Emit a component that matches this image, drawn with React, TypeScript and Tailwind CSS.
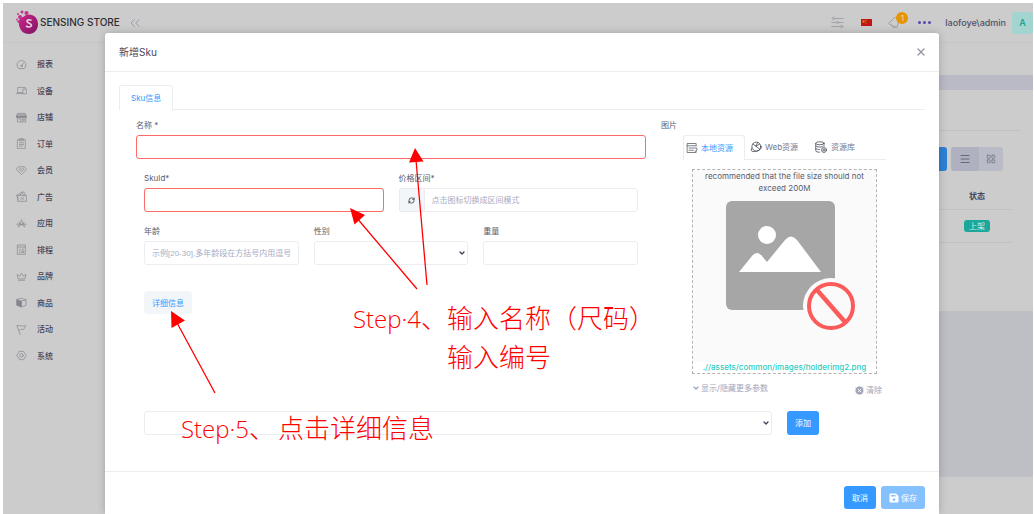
import React from "react";
import {
  ChevronDown,
  ChevronsLeft,
  CircleX,
  Menu,
  LayoutGrid,
  RefreshCw,
  X,
} from "lucide-react";

const stroke = {
  fill: "none",
  stroke: "currentColor",
  strokeWidth: 1,
  strokeLinecap: "round" as const,
  strokeLinejoin: "round" as const,
};

function Glyph({ children, className = "size-[11px]" }: { children: React.ReactNode; className?: string }) {
  return (
    <svg viewBox="0 0 16 16" className={`shrink-0 ${className}`} aria-hidden="true" {...stroke}>
      {children}
    </svg>
  );
}

const menu = [
  {
    label: "报表",
    icon: (
      <>
        <path d="M3.5 13.5a6.5 6.5 0 1 1 9 0zM8 10l3-4" />
        <circle cx="8" cy="10" r="1" />
      </>
    ),
  },
  {
    label: "设备",
    icon: <path d="M2.5 11V3.5h11V5M.5 12.5h9M10.500 6h4.500v7h-4.500zM2.500 11h7" />,
  },
  {
    label: "店铺",
    icon: (
      <>
        <path d="M3 2h10l2 4H1zM2 8v6.500h12V8M4 10h3v4M9.500 10H12v2H9.500z" />
        <path d="M1 6h14v2H1zM2 4h12" fill="currentColor" />
      </>
    ),
  },
  {
    label: "订单",
    icon: <path d="M2.500 2.500h11v13h-11zM5.500 1h5v3h-5zM5 7h6M5 9.500h6M5 12h4" />,
  },
  {
    label: "会员",
    icon: <path d="M4 2.500h8l3.500 4L8 14 .5 6.500zM4.500 6.500 8 10l3.500-3.500M5 4.500l3 2 3-2" />,
  },
  {
    label: "广告",
    icon: <path d="M3 6.500h12v8.500H3zM3 12 .8 6 9 2l2 4.500M6 6 9 .8 13 3v3.500M7 12.500l4-3M7 10h.5M10.500 12h.5" />,
  },
  {
    label: "应用",
    icon: <path d="M8 3 3 13M8 3l5 10M1 9h14M4 6.500l8 6M12 6.500l-8 6" />,
  },
  {
    label: "排程",
    icon: <path d="M2.500 1.500h11v13.500h-11zM2.500 4.500h11M5 7.500h1M5 10h1M5 12.500h1M9 7.500h2M9 10h2v2.500H9z" />,
  },
  {
    label: "品牌",
    icon: <path d="M3 11 1.500 5l4 2.500L8 3l2.500 4.500 4-2.500L13 11zM3.500 13.500h9" />,
  },
  {
    label: "商品",
    icon: (
      <>
        <path d="M8 2l6.500 2v8L8 14.500 1.500 12V4z" />
        <path d="M1.500 4 8 6v8.500L1.500 12z" fill="currentColor" />
        <path d="M8 6l6.500-2" />
      </>
    ),
  },
  {
    label: "活动",
    icon: <path d="M1.500 2.500l4.500 13M1.500 2.500c4-2 6 2 13 0-2 2-2 4-3.500 5.500-3-1-5 0-7 1.500" />,
  },
  {
    label: "系统",
    icon: (
      <>
        <path d="M5 2h6l1.500 2.500L15 8l-2.500 3.500L11 14H5l-1.500-2.500L1 8l2.500-3.500z" />
        <circle cx="8" cy="8" r="2.500" />
      </>
    ),
  },
];

function Logo() {
  return (
    <svg viewBox="0 0 23 25" className="h-[25px] w-[23px] shrink-0" aria-hidden="true">
      <defs>
        <linearGradient id="brand" x1="0" y1="0" x2="1" y2="1">
          <stop offset="0" stopColor="#d0258a" />
          <stop offset="1" stopColor="#7a1663" />
        </linearGradient>
      </defs>
      <path d="M5 7c2 1 3-1 5-2 6-2 12 2 12 9 0 6-4 10-9 10-6 0-9-4-10-9-.4-3 0-6 2-8z" fill="url(#brand)" />
      <g fill="#c4348a">
        <circle cx="6" cy="2" r="1.500" />
        <circle cx="10.500" cy="3" r="2" />
        <circle cx="2" cy="4" r="1" />
        <circle cx="4" cy="7" r="2" />
        <circle cx="1" cy="9.500" r=".9" />
        <circle cx="2.500" cy="11.500" r="1.200" />
      </g>
      <path
        d="M15.500 10.500c-2-1.300-4.500-.8-4.500.8 0 2.300 4.800 1.600 4.400 4.200-.5 1.800-3.900 2-5.400.4"
        fill="none"
        stroke="#e6cfdf"
        strokeWidth="1.700"
      />
    </svg>
  );
}

function Page() {
  return (
    <div className="flex min-h-[511px] flex-1 flex-col bg-[#cccccc] text-[#45455a]">
      <header className="flex h-10 shrink-0 items-center border-b border-[#c5c5c8] pl-[13px]">
        <Logo />
        <span className="pl-px text-[10px] font-medium text-[#2d2d33]">SENSING STORE</span>
        <button aria-label="收起菜单" className="ml-[7px] text-[#9a9aae]">
          <ChevronsLeft className="size-4" strokeWidth={1.5} />
        </button>
        <div className="ml-auto flex items-center">
          <button aria-label="设置" className="mr-[17px] text-[#96969f]">
            <Glyph className="size-[13px]">
              <path d="M5 3h10M1 8h5M10 8h5M1 13h10" />
              <circle cx="3" cy="3" r="1.500" />
              <circle cx="8" cy="8" r="1.500" />
              <circle cx="13" cy="13" r="1.500" />
            </Glyph>
          </button>
          <button aria-label="语言" className="mr-4">
            <svg viewBox="0 0 11 7" className="h-[7px] w-[11px]" aria-hidden="true">
              <path d="M0 0h11v7H0z" fill="#c31511" />
              <path d="M1.500 1.500h2v2h-2zM4.500 1h1v1h-1zM4.500 3.500h1v1h-1z" fill="#d99a1c" />
            </svg>
          </button>
          <button aria-label="通知" className="relative mr-[17px] text-[#96969f]">
            <Glyph className="size-[13px]">
              <path d="M1 9 8 2c3-1 6 2 5 5l-2 7zM5 13c1 2 4 2 4 0" />
            </Glyph>
            <span className="absolute -top-1 left-2 flex size-3 items-center justify-center rounded-full bg-[#e69500] text-[8px] text-[#f2ddb0]">
              1
            </span>
          </button>
          <button aria-label="更多" className="mr-[14px] flex gap-[2px]">
            <span className="size-[3px] rounded-full bg-[#5548b0]" />
            <span className="size-[3px] rounded-full bg-[#5548b0]" />
            <span className="size-[3px] rounded-full bg-[#5548b0]" />
          </button>
          <span className="text-[9px] font-medium text-[#50506a]">laofoye\admin</span>
          <span className="ml-[6px] flex h-[22px] w-[21px] items-center justify-center rounded-[3px] bg-[#a3d4cf] text-[9px] font-semibold text-[#1fa396]">
            A
          </span>
        </div>
      </header>
      <div className="flex flex-1">
        <nav className="w-[102px] shrink-0 pt-2">
          <ul className="grid h-[318px] grid-rows-12">
            {menu.map((item) => (
              <li key={item.label} className="flex items-center">
                <a href="#" className="flex items-center gap-[10px] pl-[13px] text-[8px] font-medium">
                  <span className="text-[#85858f]">
                    <Glyph>{item.icon}</Glyph>
                  </span>
                  {item.label}
                </a>
              </li>
            ))}
          </ul>
        </nav>
        <main className="flex min-w-0 flex-1 flex-col">
          <div className="h-8 shrink-0" />
          <div className="h-[15px] shrink-0 bg-[#b9bac5]" />
          <section className="h-[221px] shrink-0 pr-3 pt-10">
            <div className="border-t border-[#bfbfc4] pr-[18px] pt-4">
              <div className="flex justify-end">
                <button aria-label="新增" className="mr-1 h-6 w-12 rounded-[3px] bg-[#2c80d4]" />
                <button aria-label="列表" className="flex h-6 w-7 items-center justify-center rounded-l-[3px] bg-[#b0b1c0] text-[#66667c]">
                  <Menu className="size-3" />
                </button>
                <button aria-label="网格" className="flex h-6 w-6 items-center justify-center rounded-r-[3px] bg-[#b9bbc7] text-[#77778a]">
                  <LayoutGrid className="size-[10px]" />
                </button>
              </div>
            </div>
            <div className="pr-[10px]">
              <table className="w-full table-fixed text-[8px]">
                <thead>
                  <tr className="h-[38px] border-b border-[#bfbfc4]">
                    <th />
                    <th className="w-[68px] pt-3 font-semibold">状态</th>
                  </tr>
                </thead>
                <tbody>
                  <tr className="h-[33px] border-b border-[#bfbfc4]">
                    <td />
                    <td className="text-center">
                      <span className="inline-block w-[26px] rounded-[3px] bg-[#1aa89b] leading-[12px] text-[#d3e8e6]">上架</span>
                    </td>
                  </tr>
                </tbody>
              </table>
            </div>
          </section>
          <div className="flex-1 bg-[#bebfc5]" />
          <footer className="h-[37px] shrink-0" />
        </main>
      </div>
    </div>
  );
}

const control =
  "h-6 w-full min-w-0 rounded-[3px] border bg-white px-[7px] outline-none placeholder:font-['Liberation_Sans','Noto_Sans_CJK_SC',sans-serif] placeholder:text-[#a7abc3]";

function Select({ id, name }: { id: string; name?: string }) {
  return (
    <div className="relative min-w-0 flex-1">
      <select id={id} aria-label={name} className={`${control} block appearance-none border-[#ebedf2]`} />
      <ChevronDown
        className="pointer-events-none absolute right-[2px] top-2 size-2 text-[#3f4254]"
        strokeWidth={4}
        aria-hidden="true"
      />
    </div>
  );
}

function Field({ id, label, children }: { id: string; label: string; children: React.ReactNode }) {
  return (
    <div className="flex min-w-0 flex-col gap-1">
      <label htmlFor={id} className="leading-[12px]">
        {label}
      </label>
      {children}
    </div>
  );
}

function Placeholder() {
  return (
    <svg viewBox="0 0 183 168" className="block w-full" role="img" aria-label="图片占位">
      <rect x="33" y="7" width="109" height="109" rx="6" fill="#a6a6a6" />
      <circle cx="74" cy="41" r="9" fill="#fff" />
      <path
        d="M46 78 59 62Q64 56 69 62L74 68 92 46Q98 39 104 46L128 78z"
        fill="#fff"
      />
      <circle cx="138" cy="112" r="28" fill="#fafafa" />
      <circle cx="138" cy="112" r="22" fill="#fafafa" stroke="#fd5a5a" strokeWidth="4" />
      <path d="M124 96 152 128" stroke="#fd5a5a" strokeWidth="4.500" />
    </svg>
  );
}

function PicturePanel() {
  return (
    <div className="w-[264px] shrink-0">
      <div className="leading-[12px]">图片</div>
      <div className="ml-[22px] mt-1 w-[203px]">
        <div role="tablist" className="flex h-[25px] border-b border-[#ebedf2] text-[#74788d]">
          <button
            type="button"
            role="tab"
            aria-selected="true"
            className="-mb-px flex w-[62px] items-center gap-[3px] rounded-t-[3px] border border-b-0 border-[#ebedf2] bg-white pl-[2px] text-[#3699ff]"
          >
            <span className="text-[#555a66]">
              <Glyph className="block size-3">
                <path d="M13.500 5V2h-12v12h12v-2M1.500 5h12M4 8h6M4 11h6M11 8h3.500v3L12 12.500" />
              </Glyph>
            </span>
            本地资源
          </button>
          <button type="button" role="tab" aria-selected="false" className="flex items-center gap-[3px] pl-[5px]">
            <span className="text-[#3d414d]">
              <Glyph className="block size-3">
                <circle cx="8.500" cy="7.500" r="6" />
                <path d="M2.500 9.500C-.5 14 4 15 9 13.500c4-1 7-4 6-6M4 4l4 3 5-3M8 7l2-5M8 7l5 4" />
              </Glyph>
            </span>
            Web资源
          </button>
          <button type="button" role="tab" aria-selected="false" className="flex items-center gap-1 pl-[17px]">
            <span className="text-[#3d414d]">
              <Glyph className="block size-3">
                <ellipse cx="6.500" cy="3" rx="5.500" ry="2" />
                <path d="M1 3v10c0 1 2 2 5 2M12 3v4M1 6.500c1 2 7 2 9 1M1 10c1 1 3 1.500 5 1.500" />
                <circle cx="12" cy="12" r="3.300" />
                <path d="M12 10.500v3M10.500 12h3" />
              </Glyph>
            </span>
            资源库
          </button>
        </div>
        <div className="ml-[9px] mt-[9px] w-[185px] border border-dashed border-[#b4b4b4] text-center">
          <div className="bg-[#fafafa]">
            <p className="px-1 leading-[12px]">recommended that the file size should not exceed 200M</p>
            <Placeholder />
          </div>
          <a href="#" className="block whitespace-nowrap font-medium leading-[11px] text-[#2bcdbf]">
            .//assets/common/images/holderimg2.png
          </a>
        </div>
        <div className="ml-[9px] flex h-7 w-[190px] items-center justify-between text-[#a2a5b9]">
          <button type="button" className="flex items-center gap-[1px]">
            <ChevronDown className="size-2" strokeWidth={4} />
            显示/隐藏更多参数
          </button>
          <button type="button" className="flex items-center gap-px pt-1">
            <CircleX className="size-[11px] fill-[#a2a5b9] stroke-white" strokeWidth={2} />
            清除
          </button>
        </div>
      </div>
    </div>
  );
}

function SkuDialog() {
  return (
    <div
      role="dialog"
      aria-labelledby="dialog-title"
      className="flex flex-1 flex-col rounded-t-[3px] bg-white text-[8px] text-[#595d6e] shadow-[0_0_8px_rgba(0,0,0,0.2)]"
    >
      <div className="flex h-[39px] items-center justify-between border-b border-[#ebedf2] px-[14px]">
        <h1 id="dialog-title" className="text-[10px] text-[#48465b]">
          新增Sku
        </h1>
        <button aria-label="关闭" className="-mr-[2px] text-[#93939f]">
          <X className="size-3" strokeWidth={2.5} />
        </button>
      </div>
      <form className="px-[14px] pb-9 pt-[13px]" onSubmit={(e) => e.preventDefault()}>
        <div role="tablist" className="flex h-[25px] border-b border-[#ebedf2]">
          <button
            type="button"
            role="tab"
            aria-selected="true"
            className="-mb-px rounded-t-[3px] border border-b-0 border-[#ebedf2] bg-white px-[11px] text-[#3699ff]"
          >
            Sku信息
          </button>
        </div>
        <div className="flex gap-[15px] pl-[17px] pt-[9px]">
          <div className="flex min-w-0 flex-1 flex-col gap-[13px]">
            <Field id="name" label="名称 *">
              <input id="name" className={`${control} border-[#fd6a6a]`} />
            </Field>
            <div className="grid grid-cols-2 gap-[15px] px-2">
              <Field id="sku" label="SkuId*">
                <input id="sku" className={`${control} border-[#fd6a6a]`} />
              </Field>
              <Field id="price" label="价格区间*">
                <div className="flex">
                  <button
                    type="button"
                    aria-label="切换区间模式"
                    className="flex h-6 w-[25px] shrink-0 items-center justify-center rounded-l-[3px] border border-r-0 border-[#e8ebf1] bg-[#f3f6f9] text-[#494b5c]"
                  >
                    <RefreshCw className="size-[7px]" strokeWidth={3} />
                  </button>
                  <input
                    id="price"
                    placeholder="点击图标切换成区间模式"
                    className={`${control} rounded-l-none border-[#ebedf2]`}
                  />
                </div>
              </Field>
            </div>
            <div className="grid grid-cols-3 gap-[15px] px-2">
              <Field id="age" label="年龄">
                <input
                  id="age"
                  placeholder="示例[20-30],多年龄段在方括号内用逗号"
                  className={`${control} border-[#ebedf2]`}
                />
              </Field>
              <Field id="gender" label="性别">
                <Select id="gender" />
              </Field>
              <Field id="weight" label="重量">
                <input id="weight" className={`${control} border-[#ebedf2]`} />
              </Field>
            </div>
            <div className="px-2 pt-[13px]">
              <button type="button" className="h-[23px] w-12 rounded-[3px] bg-[#f3f6f9] text-[#3699ff]">
                详细信息
              </button>
            </div>
          </div>
          <PicturePanel />
        </div>
        <div className="ml-[25px] mr-[106px] mt-[9px] flex gap-[15px]">
          <Select id="detail" name="详细信息项" />
          <button type="button" className="h-6 w-8 shrink-0 rounded-[3px] bg-[#3699ff] text-white">
            添加
          </button>
        </div>
      </form>
      <div className="flex flex-1 justify-end gap-[5px] border-t border-[#ebedf2] px-[14px] pt-[14px]">
        <button className="h-[23px] w-8 rounded-[3px] bg-[#3699ff] text-white">取消</button>
        <button className="flex h-[23px] w-11 items-center justify-center gap-[2px] rounded-[3px] bg-[#86c1ff] text-white">
          <svg viewBox="0 0 10 10" className="size-[10px]" aria-hidden="true">
            <path
              fillRule="evenodd"
              fill="#fff"
              d="M1.500.5H7L9.500 3v5.500a1 1 0 0 1-1 1h-7a1 1 0 0 1-1-1v-7a1 1 0 0 1 1-1zM2 2v1.500h4.500V2zM5 5.200a1.400 1.400 0 1 0 .01 0z"
            />
          </svg>
          保存
        </button>
      </div>
    </div>
  );
}

function Annotations() {
  return (
    <div className="pointer-events-none absolute inset-0 font-['Noto_Sans_CJK_SC',sans-serif] text-[26px] font-light leading-[39px] text-[#ff0000]">
      <svg className="absolute left-0 top-0 h-[514px] w-[1034px]" viewBox="0 0 1034 514" aria-hidden="true">
        <g stroke="#f00" strokeWidth="1.300">
          <path d="M427 285 416 160M417 289 356 217M215 393 176 321" />
        </g>
        <g fill="#f00">
          <path d="M415 148l8.500 13.500-14.500 1zM350 208l15 7-10.500 9.500zM171 311l14 9.500-13.500 7.500z" />
        </g>
      </svg>
      <div className="absolute left-[353px] top-[297px] flex whitespace-nowrap">
        <p>
          <span className="font-['Open_Sans',sans-serif] text-2xl">Step·4</span>、
        </p>
        <p>
          输入名称（尺码）
          <br />
          输入编号
        </p>
      </div>
      <div className="absolute left-[181px] top-[407px] flex gap-[3px] whitespace-nowrap">
        <p>
          <span className="font-['Open_Sans',sans-serif] text-2xl">Step·5</span>、
        </p>
        <p>点击详细信息</p>
      </div>
    </div>
  );
}

export default function App() {
  return (
    <div className="relative flex min-h-screen overflow-hidden bg-white pl-[3px] pr-px pt-[3px] font-['Inter','Noto_Sans_CJK_SC',sans-serif]">
      <Page />
      <div className="absolute inset-0 flex flex-col pl-[105px] pr-[95px] pt-[33px]">
        <SkuDialog />
      </div>
      <Annotations />
    </div>
  );
}
